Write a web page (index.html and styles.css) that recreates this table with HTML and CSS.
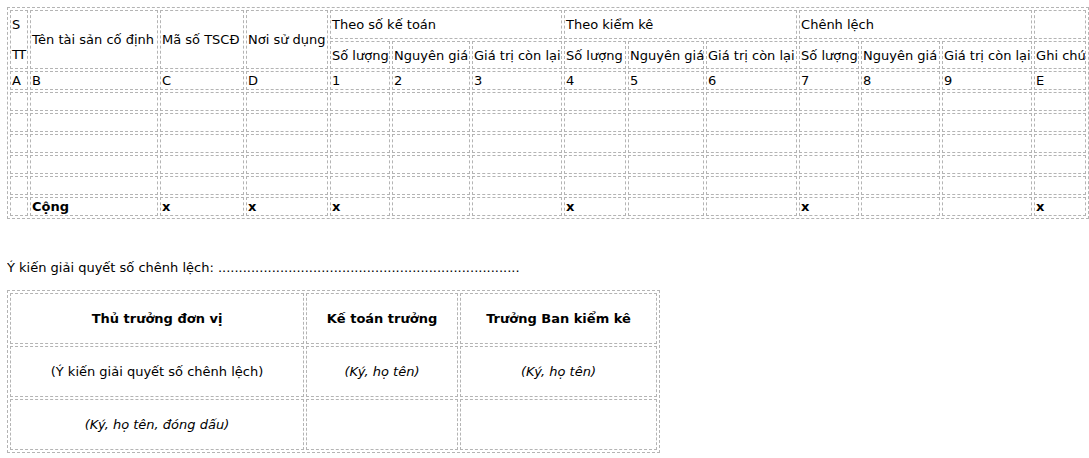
FILE: index.html
```html
<!DOCTYPE html>
<html lang="vi">
<head>
<meta charset="utf-8">
<title>Biên bản kiểm kê TSCĐ</title>
<link rel="stylesheet" href="styles.css">
</head>
<body>
<table class="grid inventory">
  <colgroup>
    <col class="c-stt"><col class="c-name"><col class="c-code"><col class="c-place">
    <col class="c-qty1"><col class="c-cost1"><col class="c-rest1">
    <col class="c-qty2"><col class="c-cost2"><col class="c-rest2">
    <col class="c-qty3"><col class="c-cost3"><col class="c-rest3">
    <col class="c-note">
  </colgroup>
  <tr class="head-1">
    <td rowspan="2" class="stt">S<br><br>TT</td>
    <td rowspan="2">Tên tài sản cố định</td>
    <td rowspan="2">Mã số TSCĐ</td>
    <td rowspan="2">Nơi sử dụng</td>
    <td colspan="3">Theo số kế toán</td>
    <td colspan="3">Theo kiểm kê</td>
    <td colspan="3">Chênh lệch</td>
    <td></td>
  </tr>
  <tr class="head-2">
    <td>Số lượng</td><td>Nguyên giá</td><td>Giá trị còn lại</td>
    <td>Số lượng</td><td>Nguyên giá</td><td>Giá trị còn lại</td>
    <td>Số lượng</td><td>Nguyên giá</td><td>Giá trị còn lại</td>
    <td>Ghi chú</td>
  </tr>
  <tr class="row">
    <td>A</td><td>B</td><td>C</td><td>D</td><td>1</td><td>2</td><td>3</td><td>4</td><td>5</td><td>6</td><td>7</td><td>8</td><td>9</td><td>E</td>
  </tr>
  <tr class="row"><td></td><td></td><td></td><td></td><td></td><td></td><td></td><td></td><td></td><td></td><td></td><td></td><td></td><td></td></tr>
  <tr class="row"><td></td><td></td><td></td><td></td><td></td><td></td><td></td><td></td><td></td><td></td><td></td><td></td><td></td><td></td></tr>
  <tr class="row"><td></td><td></td><td></td><td></td><td></td><td></td><td></td><td></td><td></td><td></td><td></td><td></td><td></td><td></td></tr>
  <tr class="row"><td></td><td></td><td></td><td></td><td></td><td></td><td></td><td></td><td></td><td></td><td></td><td></td><td></td><td></td></tr>
  <tr class="row"><td></td><td></td><td></td><td></td><td></td><td></td><td></td><td></td><td></td><td></td><td></td><td></td><td></td><td></td></tr>
  <tr class="row total">
    <td></td><td>Cộng</td><td>x</td><td>x</td><td>x</td><td></td><td></td><td>x</td><td></td><td></td><td>x</td><td></td><td></td><td>x</td>
  </tr>
</table>

<p class="opinion">Ý kiến giải quyết số chênh lệch: .........................................................................</p>

<table class="grid signatures">
  <colgroup>
    <col class="s-1"><col class="s-2"><col class="s-3">
  </colgroup>
  <tr class="sig-row">
    <td class="strong">Thủ trưởng đơn vị</td>
    <td class="strong">Kế toán trưởng</td>
    <td class="strong">Trưởng Ban kiểm kê</td>
  </tr>
  <tr class="sig-row">
    <td>(Ý kiến giải quyết số chênh lệch)</td>
    <td class="note">(Ký, họ tên)</td>
    <td class="note">(Ký, họ tên)</td>
  </tr>
  <tr class="sig-row">
    <td class="note">(Ký, họ tên, đóng dấu)</td>
    <td></td>
    <td></td>
  </tr>
</table>
</body>
</html>
```

FILE: styles.css
```css
html, body {
  background: #ffffff;
}

html {
  overflow: hidden;
}

body {
  margin: 7px 0 0 7px;
  font-family: "DejaVu Sans", Verdana, sans-serif;
  font-size: 13px;
  line-height: 15px;
  color: #000000;
}

.grid {
  border-collapse: separate;
  border-spacing: 2px;
  border: 1px dashed #b4b4b4;
  table-layout: fixed;
}

.grid td {
  border: 1px dashed #b4b4b4;
  padding: 1px;
  vertical-align: middle;
  box-sizing: border-box;
  white-space: nowrap;
  overflow: visible;
}

.inventory {
  width: 1080px;
}

.stt {
  letter-spacing: -1.5px;
}

.c-stt { width: 18px; }
.c-name { width: 128px; }
.c-code { width: 84px; }
.c-place { width: 82px; }
.c-qty1 { width: 60px; }
.c-cost1 { width: 78px; }
.c-rest1 { width: 90px; }
.c-qty2 { width: 62px; }
.c-cost2 { width: 76px; }
.c-rest2 { width: 91px; }
.c-qty3 { width: 60px; }
.c-cost3 { width: 79px; }
.c-rest3 { width: 90px; }
.c-note { width: 52px; }

.head-1 { height: 29px; }
.head-2 { height: 28px; }
.row { height: 19px; }

.total td {
  font-weight: bold;
}

.opinion {
  margin: 41px 0 15px;
}

.signatures {
  width: 651px;
}

.s-1 { width: 294px; }
.s-2 { width: 152px; }
.s-3 { width: 197px; }

.signatures td {
  text-align: center;
}

.sig-row { height: 51px; }

.strong {
  font-weight: bold;
}

.note {
  font-style: italic;
}
```
